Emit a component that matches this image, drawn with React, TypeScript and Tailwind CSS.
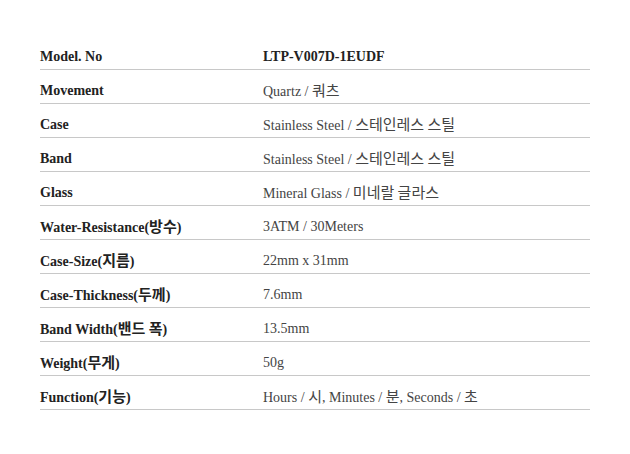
const rows: [string, string, boolean?][] = [
  ["Model. No", "LTP-V007D-1EUDF", true],
  ["Movement", "Quartz / 쿼츠"],
  ["Case", "Stainless Steel / 스테인레스 스틸"],
  ["Band", "Stainless Steel / 스테인레스 스틸"],
  ["Glass", "Mineral Glass / 미네랄 글라스"],
  ["Water-Resistance(방수)", "3ATM / 30Meters"],
  ["Case-Size(지름)", "22mm x 31mm"],
  ["Case-Thickness(두께)", "7.6mm"],
  ["Band Width(밴드 폭)", "13.5mm"],
  ["Weight(무게)", "50g"],
  ["Function(기능)", "Hours / 시, Minutes / 분, Seconds / 초"],
];

// hangul runs get a slightly bigger size, like the gulim fallback in the original
function Text({ s }: { s: string }) {
  const parts = s.split(/([\u3131-\uD79D]+(?: [\u3131-\uD79D]+)*)/);
  return (
    <>
      {parts.map((p, i) =>
        i % 2 === 1 ? (
          <span key={i} className="text-[15px] font-['Noto_Sans_CJK_KR',sans-serif]">{p}</span>
        ) : (
          <span key={i}>{p}</span>
        )
      )}
    </>
  );
}

export default function App() {
  return (
    <div className="w-[630px] h-[454px] bg-white pt-[36px] pl-[40px] font-['Liberation_Serif','Noto_Sans_CJK_KR',serif]">
      <div className="w-[550px]">
        {rows.map(([label, value, bold]) => (
          <div key={label} className="flex h-[34px] items-center border-b border-[#c8c8c8] text-[14px] leading-[21px] pt-[8px]">
            <div className="w-[223px] font-bold text-[#222]"><Text s={label} /></div>
            <div className={bold ? "font-bold text-[#222]" : "text-[#444]"}><Text s={value} /></div>
          </div>
        ))}
      </div>
    </div>
  );
}
